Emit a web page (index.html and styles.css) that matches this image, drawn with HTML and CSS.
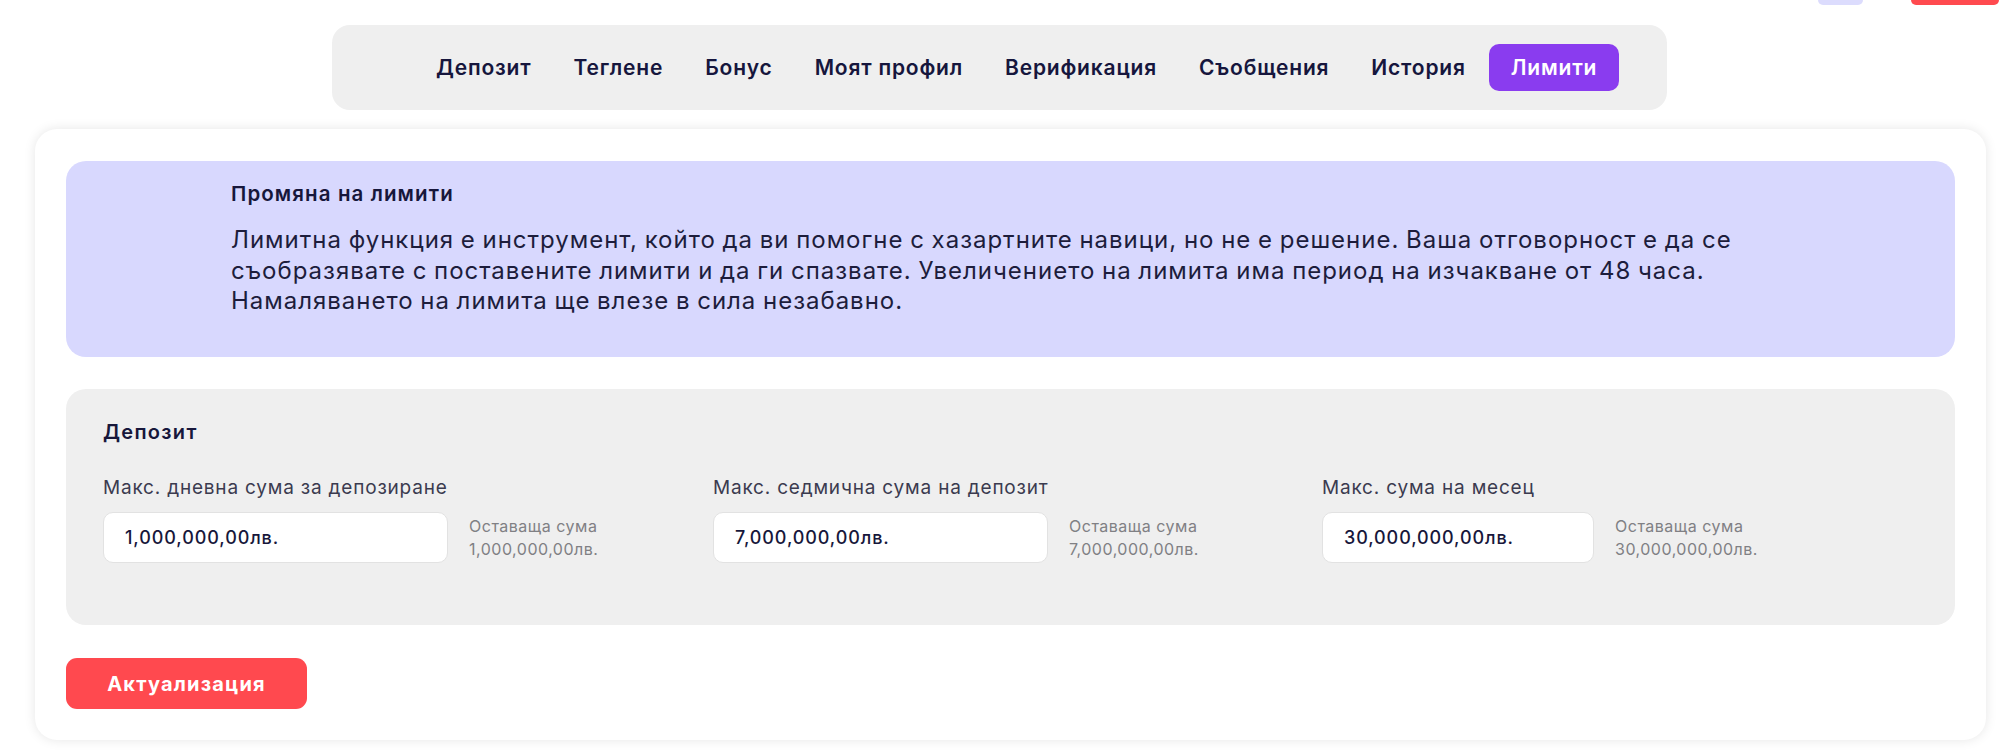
FILE: index.html
```html
<!DOCTYPE html>
<html lang="bg">
<head>
<meta charset="utf-8">
<title>Лимити</title>
<link rel="stylesheet" href="styles.css">
</head>
<body>
<div class="topbar">
  <span class="top-chip top-chip--lavender"></span>
  <span class="top-chip top-chip--red"></span>
</div>
<nav class="tabs">
  <a class="tab">Депозит</a>
  <a class="tab">Теглене</a>
  <a class="tab">Бонус</a>
  <a class="tab">Моят профил</a>
  <a class="tab">Верификация</a>
  <a class="tab">Съобщения</a>
  <a class="tab">История</a>
  <a class="tab tab--active">Лимити</a>
</nav>
<main class="card">
  <section class="notice">
    <h2 class="notice-title">Промяна на лимити</h2>
    <p class="notice-text">Лимитна функция е инструмент, който да ви помогне с хазартните навици, но не е решение. Ваша отговорност е да се съобразявате с поставените лимити и да ги спазвате. Увеличението на лимита има период на изчакване от 48 часа. Намаляването на лимита ще влезе в сила незабавно.</p>
  </section>
  <section class="limits">
    <h3 class="limits-title">Депозит</h3>
    <div class="limits-grid">
      <div class="field">
        <label class="field-label">Макс. дневна сума за депозиране</label>
        <div class="field-row">
          <div class="field-input field-input--day">1,000,000,00лв.</div>
          <div class="field-rest">
            <span>Оставаща сума</span>
            <span>1,000,000,00лв.</span>
          </div>
        </div>
      </div>
      <div class="field">
        <label class="field-label">Макс. седмична сума на депозит</label>
        <div class="field-row">
          <div class="field-input field-input--week">7,000,000,00лв.</div>
          <div class="field-rest">
            <span>Оставаща сума</span>
            <span>7,000,000,00лв.</span>
          </div>
        </div>
      </div>
      <div class="field">
        <label class="field-label">Макс. сума на месец</label>
        <div class="field-row">
          <div class="field-input field-input--month">30,000,000,00лв.</div>
          <div class="field-rest">
            <span>Оставаща сума</span>
            <span>30,000,000,00лв.</span>
          </div>
        </div>
      </div>
    </div>
  </section>
  <div class="actions">
    <button class="btn-update">Актуализация</button>
  </div>
</main>
</body>
</html>
```

FILE: styles.css
```css
* { box-sizing: border-box; }
html, body { margin: 0; padding: 0; }
body {
  background: #ffffff;
  font-family: "Inter", "Noto Sans", sans-serif;
  color: #17173b;
  width: 1999px;
  height: 754px;
  overflow: hidden;
}
.topbar {
  display: flex;
  justify-content: flex-end;
  gap: 48px;
  height: 5px;
}
.top-chip {
  display: block;
  height: 5px;
  border-radius: 0 0 8px 8px;
}
.top-chip--lavender { width: 45px; background: #dcdcfd; }
.top-chip--red { width: 88px; background: #ff4a4f; }

.tabs {
  width: 1335px;
  height: 85px;
  margin: 20px auto 0;
  background: #efefef;
  border-radius: 18px;
  display: flex;
  align-items: center;
  padding-left: 83px;
}
.tab {
  display: flex;
  align-items: center;
  height: 47px;
  padding: 0 21px;
  font-size: 21px;
  font-weight: 600;
  color: #16163d;
  border-radius: 10px;
  letter-spacing: 0.8px;
}
.tab--active {
  background: #8a3cef;
  color: #ffffff;
  padding: 0 22px;
  margin-left: 2px;
}

.card {
  margin: 19px 13px 0 35px;
  background: #ffffff;
  border-radius: 22px;
  box-shadow: 0 0 12px rgba(0,0,0,0.10);
  padding: 32px 31px 31px;
}
.notice {
  background: #d8d8fe;
  border-radius: 20px;
  padding: 21px 40px 41px 165px;
  height: 196px;
}
.notice-title {
  margin: 0;
  font-size: 20.5px;
  line-height: 24px;
  font-weight: 600;
  color: #17173b;
  letter-spacing: 1.1px;
}
.notice-text {
  margin: 19px 0 0;
  font-size: 24px;
  line-height: 30.5px;
  color: #1d1d3c;
  max-width: 1560px;
  letter-spacing: 0.98px;
  word-spacing: -1px;
}

.limits {
  margin-top: 32px;
  background: #efefef;
  border-radius: 20px;
  padding: 31px 37px 62px;
  height: 236px;
}
.limits-title {
  margin: 0;
  font-size: 20px;
  line-height: 24px;
  font-weight: 600;
  color: #17173b;
  letter-spacing: 1.3px;
}
.limits-grid {
  margin-top: 32px;
  display: grid;
  grid-template-columns: 610px 609px 1fr;
}
.field {
  display: flex;
  flex-direction: column;
  gap: 12px;
}
.field-label {
  font-size: 19px;
  line-height: 24px;
  color: #3b3b4f;
  letter-spacing: 0.8px;
}
.field-row {
  display: flex;
  align-items: center;
  gap: 21px;
}
.field-input {
  height: 51px;
  background: #ffffff;
  border: 1px solid #e2e2e2;
  border-radius: 10px;
  display: flex;
  align-items: center;
  padding-left: 21px;
  font-size: 18px;
  font-weight: 500;
  color: #17173b;
  letter-spacing: 0.9px;
}
.field-input--day { width: 345px; }
.field-input--week { width: 335px; }
.field-input--month { width: 272px; }
.field-rest {
  display: flex;
  flex-direction: column;
  font-size: 16px;
  line-height: 23px;
  color: #808084;
  letter-spacing: 0.5px;
}

.actions {
  margin-top: 33px;
  display: flex;
}
.btn-update {
  width: 241px;
  height: 51px;
  border: 0;
  border-radius: 11px;
  background: #ff494f;
  color: #ffffff;
  font-family: "Inter", "Noto Sans", sans-serif;
  font-size: 20px;
  font-weight: 700;
  letter-spacing: 1.2px;
}
```
